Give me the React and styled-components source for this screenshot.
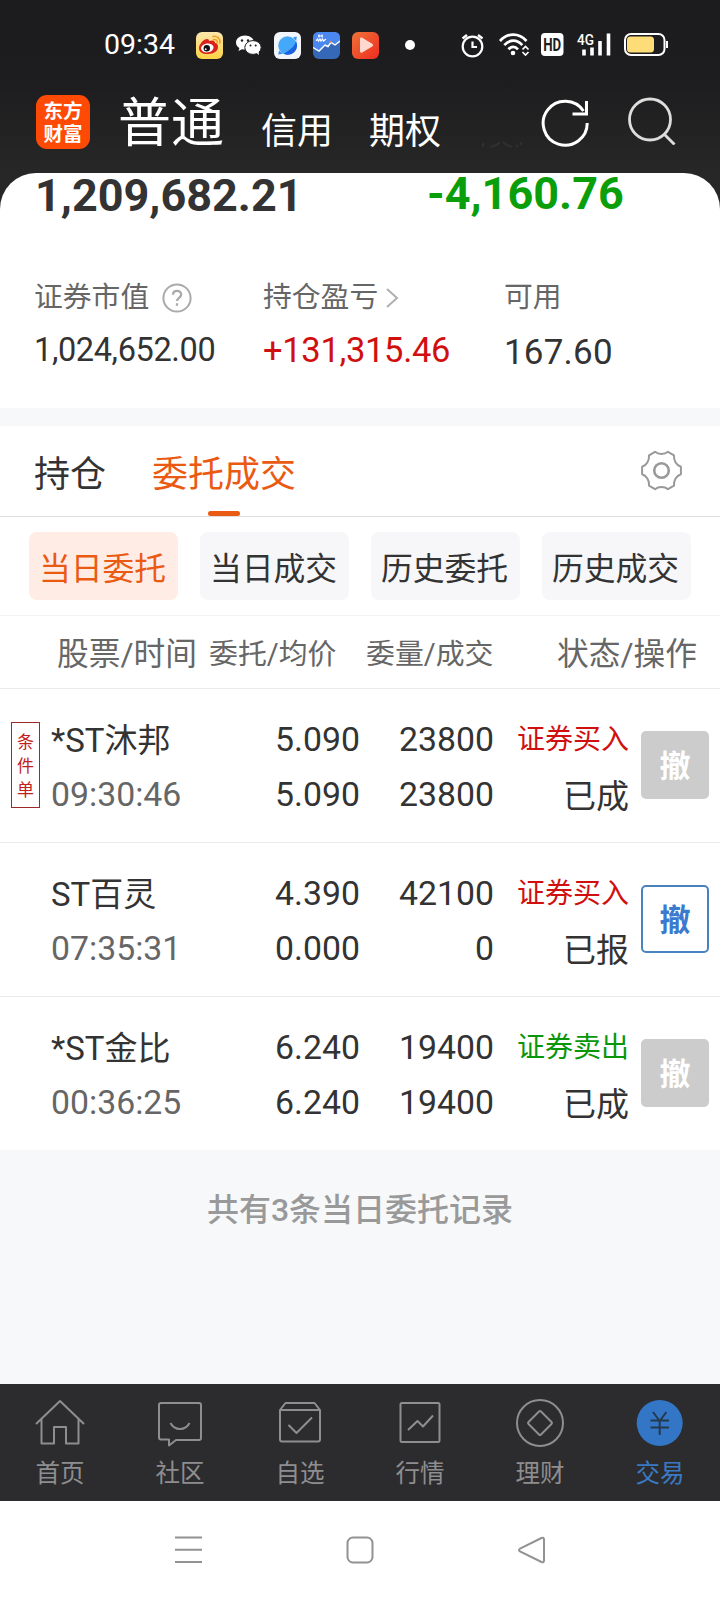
import React, { useState } from 'react';
import styled, { createGlobalStyle } from 'styled-components';

const GlobalStyle = createGlobalStyle`
	* {
		box-sizing: border-box;
	}
	body {
		margin: 0;
		background: #fff;
		font-family: Roboto, 'Noto Sans CJK SC', sans-serif;
		color: #333;
	}
	svg {
		display: block;
		flex: none;
	}
	button {
		font-family: inherit;
		border: 0;
		padding: 0;
		background: none;
		cursor: pointer;
	}
`;
const Page = styled.div`
	width: 720px;
	height: 1600px;
	display: flex;
	flex-direction: column;
	overflow: hidden;
	background: #f7f8fa;
`;
const Top = styled.header`
	height: 210px;
	flex: none;
	background: linear-gradient(#1c1c1e 0, #1d1d1f 80px, #272727 173px);
`;
const StatusBar = styled.div`
	height: 90px;
	display: flex;
	align-items: center;
	padding-left: 104px;
	color: #fff;
`;
const Clock = styled.span`
	width: 92px;
	font-size: 28.5px;
	line-height: 40px;
`;
const AppIcons = styled.div`
	display: flex;
	align-items: center;
	gap: 12px;
	width: 264px;
`;
const SystemIcons = styled.div`
	display: flex;
	align-items: center;
`;
const Header = styled.div`
	height: 83px;
	display: flex;
	align-items: flex-start;
	padding: 5px 0 0 36px;
	color: #fff;
`;
const Logo = styled.div`
	width: 54px;
	height: 54px;
	padding-top: 5px;
	border-radius: 11px;
	background: #ff4a05;
	font-size: 19.5px;
	font-weight: 700;
	line-height: 23px;
	text-align: center;
`;
const Account = styled.span`
	font-size: ${props => (props.$active ? 53 : 36)}px;
	line-height: 54px;
	margin: ${props => (props.$active ? '2px 1px 0 28px' : '10px 0 0 36px')};
	white-space: nowrap;
`;
const HeaderActions = styled.div`
	display: flex;
	margin-left: 36px;
`;
const Card = styled.section`
	height: 235px;
	flex: none;
	margin-top: -37px;
	border-radius: 36px 36px 0 0;
	background: #fff;
`;
const Totals = styled.div`
	display: grid;
	grid-template-columns: 392px 1fr;
	padding-left: 35px;
	height: 107px;
`;
const Total = styled.strong`
	font-size: 45px;
	font-weight: 700;
	line-height: ${props => (props.$loss ? 42 : 46)}px;
	color: ${props => (props.$loss ? '#0a9f0a' : '#333')};
`;
const Stats = styled.div`
	display: grid;
	grid-template-columns: 229px 241px 1fr;
	padding-left: 34px;
`;
const StatLabel = styled.div`
	display: flex;
	align-items: center;
	height: 35px;
	font-size: 28.8px;
	line-height: 35px;
	color: #666;
`;
const StatValue = styled.div`
	font-size: ${props => props.$size}px;
	line-height: 40px;
	padding-top: ${props => props.$drop}px;
	letter-spacing: ${props => props.$track || 0}px;
	color: ${props => (props.$gain ? '#d0100f' : '#333')};
`;
const Tabs = styled.nav`
	display: flex;
	height: 91px;
	flex: none;
	margin-top: 18px;
	padding: 0 37px 0 34px;
	border-bottom: 1px solid #dedede;
	background: #fff;
`;
const Tab = styled.button`
	display: flex;
	flex-direction: column;
	justify-content: space-between;
	align-items: center;
	margin-right: 46px;
	padding-top: 22px;
	font-size: 36px;
	line-height: 54px;
	color: ${props => (props.$active ? '#ea5a13' : '#333')};
	&::after {
		content: '';
		width: 32px;
		height: 5px;
		border-radius: 3px;
		background: ${props => (props.$active ? '#ea5a13' : 'transparent')};
	}
`;
const Settings = styled.div`
	margin: 23px 0 0 auto;
`;
const Filters = styled.div`
	display: flex;
	gap: 22px;
	height: 99px;
	flex: none;
	padding: 15px 29px;
	border-bottom: 1px solid #f3f3f4;
	background: #fff;
`;
const Filter = styled.button`
	flex: 1;
	height: 68px;
	padding: 5px 2px 0 0;
	border-radius: 8px;
	font-size: 31.8px;
	line-height: 50px;
	white-space: nowrap;
	color: ${props => (props.$active ? '#ea5a13' : '#333')};
	background: ${props => (props.$active ? '#ffede5' : '#f7f7fa')};
`;
const TableHead = styled.div`
	display: grid;
	grid-template-columns: 152px 157px 191px 1fr;
	height: 73px;
	flex: none;
	padding: 0 0 0 57px;
	border-bottom: 1px solid #ebebeb;
	background: #fff;
	color: #666;
	line-height: 77px;
`;
const HeadCell = styled.span`
	font-size: ${props => (props.$wide ? 31.7 : 28.9)}px;
	white-space: nowrap;
`;
const Row = styled.div`
	display: grid;
	grid-template-columns: 40px 170px 139px 134px 135px 68px;
	height: ${props => (props.$last ? 153 : 154)}px;
	flex: none;
	padding: 0 11px;
	border-bottom: ${props => (props.$last ? 0 : 1)}px solid #ebebeb;
	background: #fff;
`;
const Tag = styled.div`
	width: 29px;
	height: 86px;
	margin-top: 33px;
	padding-top: 7px;
	border: 1px solid #9c2a2a;
	color: #c1201f;
	font-size: 17px;
	line-height: 24px;
	text-align: center;
	word-break: break-all;
`;
const Cell = styled.div`
	display: flex;
	flex-direction: column;
	padding-top: 23px;
	font-size: 33.8px;
	line-height: 55px;
	white-space: nowrap;
	text-align: ${props => (props.$left ? 'left' : 'right')};
`;
const Name = styled.span`
	height: 55px;
	font-size: 33px;
	line-height: 57px;
`;
const Time = styled.span`
	color: #666;
`;
const Side = styled.span`
	height: 55px;
	font-size: 28px;
	line-height: 56px;
	color: ${props => (props.$sell ? '#0a960a' : '#d0100f')};
`;
const State = styled.span`
	font-size: 33px;
	line-height: 59px;
`;
const Cancel = styled.button`
	width: 68px;
	height: 68px;
	margin: 42px 0 0 12px;
	padding-top: 3px;
	border: 2px solid ${props => (props.disabled ? '#ccc' : '#4a82bd')};
	border-radius: 5px;
	background: ${props => (props.disabled ? '#ccc' : '#fff')};
	color: ${props => (props.disabled ? '#fff' : '#3a7bd0')};
	font-size: 31px;
	font-weight: 700;
	line-height: 50px;
`;
const Summary = styled.p`
	flex: 1;
	margin: 0;
	padding-top: 38px;
	font-size: 32px;
	font-weight: 500;
	line-height: 44px;
	text-align: center;
	color: #999;
`;
const TabBar = styled.nav`
	display: grid;
	grid-template-columns: repeat(6, 1fr);
	height: 117px;
	flex: none;
	background: #2c2c2e;
`;
const BarItem = styled.button`
	display: flex;
	flex-direction: column;
	align-items: center;
	padding-top: 14px;
	font-size: 24.5px;
	line-height: 51px;
	color: ${props => (props.$active ? '#3a7ac4' : '#8e8e90')};
`;
const SystemNav = styled.div`
	display: flex;
	justify-content: space-between;
	height: 99px;
	flex: none;
	padding: 33px 172px 0 172px;
	background: #fff;
`;

const WeiboIcon = () => (
	<svg width="27" height="27" viewBox="0 0 27 27">
		<defs>
			<linearGradient id="weibo" x2="0" y2="1">
				<stop stopColor="#fbe7ae" />
				<stop offset="1" stopColor="#ffd345" />
			</linearGradient>
		</defs>
		<rect width="27" height="27" rx="6" fill="url(#weibo)" />
		<path d="M3 16c0-4 5-9 8-9 2 0 2 1 2 2 3-1 6-1 6 2 2 0 3 2 3 4 0 4-4 7-10 7s-9-2-9-6z" fill="#dc211c" />
		<ellipse cx="11.3" cy="16" rx="6.3" ry="4.4" fill="#fff" transform="rotate(-8 11 16)" />
		<circle cx="10.8" cy="16.3" r="3.2" fill="#111" />
		<circle cx="9.7" cy="17.2" r="0.9" fill="#fff" />
		<path d="M17 4.500c4-1 7.500 2 7 6.500M17.500 7.500c2.500-.3 4 1 3.700 3.300" fill="none" stroke="#eda32a" strokeWidth="1.600" strokeLinecap="round" />
	</svg>
);
const WechatIcon = () => (
	<svg width="27" height="27" viewBox="0 0 27 27" fill="#fff">
		<path d="M10 3.500c-5 0-9 3-9 7 0 2.400 1.400 4.300 3.400 5.500L3.500 19l3.500-1.700c4.500 1 12-1.300 12-6.800 0-4-4-7-9-7z" />
		<ellipse cx="18" cy="15.500" rx="8.200" ry="6.900" stroke="#1d1d1f" strokeWidth="1" />
		<path d="M21 20.500l3 2.500-.5-4z" />
		<g fill="#1d1d1f">
			<circle cx="7" cy="8.500" r="1.200" />
			<circle cx="13" cy="8.500" r="1.200" />
			<circle cx="15.500" cy="13.500" r="1" />
			<circle cx="20.700" cy="13.500" r="1" />
		</g>
	</svg>
);
const BrowserIcon = () => (
	<svg width="27" height="27" viewBox="0 0 27 27">
		<rect width="27" height="27" rx="6" fill="#f2f6fb" />
		<circle cx="13.500" cy="13.500" r="9.300" fill="#45a9fb" />
		<path d="M22 9c-1 5-6 9.500-12.500 12.800 4 2 8.500 1 11.200-2 2.800-3.200 3-7 1.300-10.800z" fill="#1b61e0" />
		<path d="M19 5.500l3.800-1-.6 4.500zM5 18.500l-.8 4 4.800-.8z" fill="#3393f5" />
	</svg>
);
const StockIcon = () => (
	<svg width="27" height="27" viewBox="0 0 27 27">
		<rect width="27" height="27" rx="6" fill="#3668b8" />
		<path d="M0 16l5 3 7-5 3 2 3-6 4 3 5-4V6c0-4-2-6-6-6H6C2 0 0 2 0 6z" fill="#4a87ee" />
		<path d="M0 15.500l6 3.500 6-6 3 1.500 3-4 4 2.500 5-4" fill="none" stroke="#fff" strokeWidth="1.400" />
		<path d="M3 9l1.500-2 1 2L7 7l1 2 1.500-2 1 2L13 7M5 4h5M6 2.500v3M9 2.500v3" fill="none" stroke="#fff" strokeWidth="1.200" />
		<circle cx="17.500" cy="10" r="1.100" fill="#f08a4b" />
	</svg>
);
const VideoIcon = () => (
	<svg width="27" height="27" viewBox="0 0 27 27">
		<defs>
			<linearGradient id="video" x2="1" y2="1">
				<stop stopColor="#ee7338" />
				<stop offset="1" stopColor="#ee2c20" />
			</linearGradient>
		</defs>
		<rect width="27" height="27" rx="6" fill="url(#video)" />
		<path d="M8 7c0-1.500 1-2 2.200-1.300l10 6c1.200.8 1.200 1.900 0 2.700l-10 6c-1.200.7-2.200.2-2.200-1.300z" fill="#ffd9cf" />
	</svg>
);
const StatusGlyphs = () => (
	<svg width="208" height="28" viewBox="460 31 208 28" fill="none" stroke="#fff">
		<circle cx="472.500" cy="46.500" r="9.800" strokeWidth="2.200" />
		<path d="M472.500 41.500v5.500h4.500" strokeWidth="2.200" />
		<path d="M462.500 38.500l4.500-3.500M482.500 38.500l-4.500-3.500" strokeWidth="2.400" />
		<path d="M500 41c7.500-8.500 19-8.500 26.500 0M504.300 45.200c5.500-6 12.500-6 18 0M508.500 49.300c3-3.300 6.500-3.300 9.500 0" strokeWidth="2.700" />
		<circle cx="513" cy="53" r="2.300" fill="#fff" stroke="none" />
		<path d="M522.500 49.500l3-3 3 3M522.500 52l3 3 3-3" strokeWidth="1.700" />
		<rect x="541" y="33" width="22.500" height="23" rx="4" fill="#fff" stroke="none" />
		<text x="552.200" y="51" textAnchor="middle" fontSize="17.500" fontWeight="700" fill="#1d1d1f" stroke="none" textLength="18" lengthAdjust="spacingAndGlyphs">HD</text>
		<text x="577" y="44.500" fontSize="15" fontWeight="500" fill="#fff" stroke="none" textLength="17" lengthAdjust="spacingAndGlyphs">4G</text>
		<path d="M584 49.500v6M592 47.500v8M600 41v14.500M608.500 33.500v22" strokeWidth="3.600" />
		<rect x="625" y="34" width="39.500" height="21" rx="6" strokeWidth="2" />
		<rect x="627" y="36.500" width="27" height="16" rx="3.500" fill="#fedd79" stroke="none" />
		<path d="M667 41v7" strokeWidth="2" />
	</svg>
);
const RefreshIcon = () => (
	<svg width="50" height="52" viewBox="0 0 50 52" fill="none" stroke="#fff" strokeWidth="3">
		<path d="M47.200 28A22 22 0 1 1 43.500 16M46.500 6v13H32.500" />
	</svg>
);
const SearchIcon = () => (
	<svg width="50" height="50" viewBox="0 0 50 50" fill="none" stroke="#ddd" strokeWidth="2.800">
		<circle cx="24" cy="24.500" r="20.500" />
		<path d="M38 39l10.500 10.500" />
	</svg>
);
const HelpMark = styled.svg`
	margin-left: 13px;
`;
const HelpIcon = () => (
	<HelpMark width="30" height="30" viewBox="0 0 30 30" fill="none" stroke="#aaa" strokeWidth="2">
		<circle cx="15" cy="15" r="13.600" />
		<path d="M11 11.800c0-5.200 8.200-5 8.200-.2 0 3.200-4.200 3.200-4.200 6.400M15 20.200v2.600" strokeWidth="2.300" />
	</HelpMark>
);
const GearIcon = () => (
	<svg width="43" height="43" viewBox="-21.500 -21.500 43 43" fill="none" stroke="#999" strokeWidth="2" strokeLinejoin="round">
		<circle r="7.300" strokeWidth="2.600" />
		<path d="M-6.500-18.700C-3-15.800 3-15.800 6.500-18.700L12.500-15.200C12-10 15-5.200 19.400-3.800V3.800C15 5.200 12 10 12.500 15.200L6.500 18.700C3 15.800-3 15.800-6.500 18.700L-12.500 15.200C-12 10-15 5.200-19.400 3.800V-3.800C-15-5.200-12-10-12.500-15.200Z" />
	</svg>
);

const barIcons = {
	home: (
		<path d="M1 26L25 3l24 23M6.500 21v24.500H19V29h12v16.500h12.500V21" />
	),
	community: (
		<path d="M6 5h38q2 0 2 2v33q0 2-2 2H21l-7 5.500V41.500H6q-2 0-2-2V7q0-2 2-2zM15.500 25c4 8 15 8 19 0" />
	),
	watchlist: (
		<path d="M5 12v29q0 2.500 2 2.500h36q2 0 2-2.500V12l-5.500-7H10.500zM5 12h40M13.500 27l8 8L37 19.500" />
	),
	market: (
		<path d="M7 5h36q1.500 0 1.500 1.500v36q0 1.500-1.500 1.500H7q-1.500 0-1.500-1.500v-36Q5.500 5 7 5zM13 32l9.500-9 5.500 5.500L38 17.500" />
	),
	wealth: (
		<React.Fragment>
			<circle cx="25" cy="25" r="23" />
			<path d="M24 13.500L13.500 24q-1 1 0 2L24 36.500q1 1 2 0L36.500 26q1-1 0-2L26 13.500q-1-1-2 0z" />
		</React.Fragment>
	),
	trade: (
		<React.Fragment>
			<circle cx="24.700" cy="25" r="23" fill="#3276c5" stroke="none" />
			<path d="M18 14l6.700 9 6.700-9M24.700 23v14M15.500 22.500h18.500M15.500 29.500h18.500" stroke="#26384f" />
		</React.Fragment>
	)
};
const barItems = [
	{ id: 'home', label: '首页' },
	{ id: 'community', label: '社区' },
	{ id: 'watchlist', label: '自选' },
	{ id: 'market', label: '行情' },
	{ id: 'wealth', label: '理财' },
	{ id: 'trade', label: '交易' }
];
const filters = ['当日委托', '当日成交', '历史委托', '历史成交'];
const orders = [
	{ name: '*ST沐邦', time: '09:30:46', price: '5.090', avg: '5.090', amount: '23800', filled: '23800', side: '证券买入', state: '已成', conditional: true },
	{ name: 'ST百灵', time: '07:35:31', price: '4.390', avg: '0.000', amount: '42100', filled: '0', side: '证券买入', state: '已报', open: true },
	{ name: '*ST金比', time: '00:36:25', price: '6.240', avg: '6.240', amount: '19400', filled: '19400', side: '证券卖出', state: '已成', sell: true }
];

const OrderRow = ({ order, last }) => (
	<Row $last={last}>
		<div>{order.conditional ? <Tag>条件单</Tag> : null}</div>
		<Cell $left>
			<Name>{order.name}</Name>
			<Time>{order.time}</Time>
		</Cell>
		<Cell>
			<span>{order.price}</span>
			<span>{order.avg}</span>
		</Cell>
		<Cell>
			<span>{order.amount}</span>
			<span>{order.filled}</span>
		</Cell>
		<Cell>
			<Side $sell={order.sell}>{order.side}</Side>
			<State>{order.state}</State>
		</Cell>
		<Cancel disabled={!order.open}>撤</Cancel>
	</Row>
);

const App = () => {
	const [tab, setTab] = useState('委托成交');
	const [filter, setFilter] = useState('当日委托');
	return (
		<Page>
			<GlobalStyle />
			<Top>
				<StatusBar>
					<Clock>09:34</Clock>
					<AppIcons>
						<WeiboIcon />
						<WechatIcon />
						<BrowserIcon />
						<StockIcon />
						<VideoIcon />
						<svg width="38" height="10" viewBox="0 0 38 10">
							<circle cx="19" cy="5" r="5" fill="#fff" />
						</svg>
					</AppIcons>
					<SystemIcons>
						<StatusGlyphs />
					</SystemIcons>
				</StatusBar>
				<Header>
					<Logo>
						东方
						<br />
						财富
					</Logo>
					<Account $active>普通</Account>
					<Account>信用</Account>
					<Account>期权</Account>
					<HeaderActions>
						<svg width="63" height="54" viewBox="0 0 63 54" fill="none" stroke="#303030" strokeWidth="2">
							<path d="M6 48v4M13 52q6-1 10-5M26 47q4 4 9 5M39 50l2 2M44 50v-3" />
						</svg>
						<RefreshIcon />
						<svg width="36" height="1" />
						<SearchIcon />
					</HeaderActions>
				</Header>
			</Top>
			<Card>
				<Totals>
					<Total>1,209,682.21</Total>
					<Total $loss>-4,160.76</Total>
				</Totals>
				<Stats>
					<div>
						<StatLabel>
							证券市值
							<HelpIcon />
						</StatLabel>
						<StatValue $size={32.5} $drop={15} $track={-0.37}>1,024,652.00</StatValue>
					</div>
					<div>
						<StatLabel>
							持仓盈亏
							<svg width="24" height="24" viewBox="0 0 24 24" fill="none" stroke="#b0b0b0" strokeWidth="2">
								<path d="M9 3l10 9-10 9" />
							</svg>
						</StatLabel>
						<StatValue $size={34.5} $drop={15} $track={-0.32} $gain>+131,315.46</StatValue>
					</div>
					<div>
						<StatLabel>可用</StatLabel>
						<StatValue $size={35} $drop={18} $track={0.2}>167.60</StatValue>
					</div>
				</Stats>
			</Card>
			<Tabs>
				{['持仓', '委托成交'].map(label => (
					<Tab key={label} $active={tab === label} onClick={() => setTab(label)}>
						{label}
					</Tab>
				))}
				<Settings>
					<GearIcon />
				</Settings>
			</Tabs>
			<Filters>
				{filters.map(label => (
					<Filter key={label} $active={filter === label} onClick={() => setFilter(label)}>
						{label}
					</Filter>
				))}
			</Filters>
			<TableHead>
				<HeadCell $wide>股票/时间</HeadCell>
				<HeadCell>委托/均价</HeadCell>
				<HeadCell>委量/成交</HeadCell>
				<HeadCell $wide>状态/操作</HeadCell>
			</TableHead>
			{orders.map((order, i) => (
				<OrderRow key={order.name} order={order} last={i === orders.length - 1} />
			))}
			<Summary>共有3条当日委托记录</Summary>
			<TabBar>
				{barItems.map(item => (
					<BarItem key={item.id} $active={item.id === 'trade'}>
						<svg width="50" height="50" viewBox="0 0 50 50" fill="none" stroke="#8e8e90" strokeWidth="2" strokeLinejoin="round">
							{barIcons[item.id]}
						</svg>
						{item.label}
					</BarItem>
				))}
			</TabBar>
			<SystemNav>
				<svg width="32" height="32" viewBox="0 0 32 32" stroke="#929292" strokeWidth="2">
					<path d="M3 3.500h27M3 15.700h27M3 28h27" />
				</svg>
				<svg width="32" height="32" viewBox="0 0 32 32" fill="none" stroke="#929292" strokeWidth="2">
					<rect x="3.500" y="3.500" width="25" height="25" rx="5.500" />
				</svg>
				<svg width="32" height="32" viewBox="0 0 32 32" fill="none" stroke="#929292" strokeWidth="2">
					<path d="M4 14.700L25.500 4q2.500-1 2.500 1.500v21q0 2.500-2.500 1.500L4 17.500q-2-1.400 0-2.800z" />
				</svg>
			</SystemNav>
		</Page>
	);
};

export default App;
